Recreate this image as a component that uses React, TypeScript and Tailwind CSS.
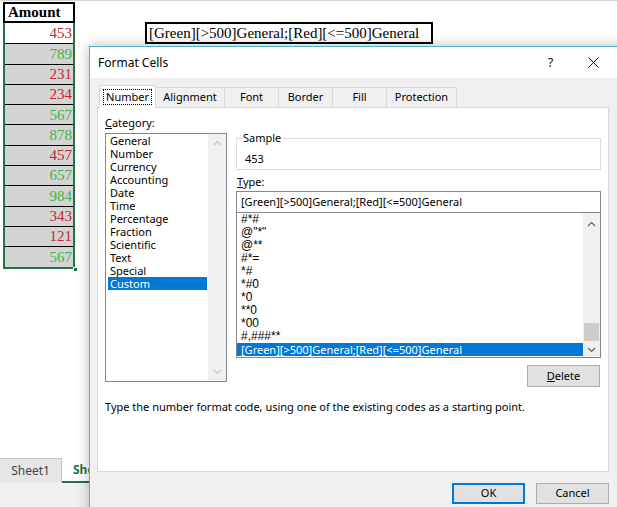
import React from 'react';

const UI = { fontFamily: '"Noto Sans", "Open Sans", sans-serif' };
const SERIF = { fontFamily: '"Liberation Serif", "Times New Roman", serif' };
const ARIAL = { fontFamily: '"Liberation Sans", Arial, sans-serif' };

const AMOUNTS: [number, 'r' | 'g'][] = [
  [453, 'r'], [789, 'g'], [231, 'r'], [234, 'r'], [567, 'g'], [878, 'g'],
  [457, 'r'], [657, 'g'], [984, 'g'], [343, 'r'], [121, 'r'], [567, 'g'],
];

const CATEGORIES = [
  'General', 'Number', 'Currency', 'Accounting', 'Date', 'Time',
  'Percentage', 'Fraction', 'Scientific', 'Text', 'Special', 'Custom',
];

const CODES = ['#*#', '@"*"', '@**', '#*=', '*#', '*#0', '*0', '**0', '*00', '#,###**'];

const TABS = [
  { label: 'Number', w: 'w-[57px]' },
  { label: 'Alignment', w: 'w-[69px]' },
  { label: 'Font', w: 'w-[54px]' },
  { label: 'Border', w: 'w-[54px]' },
  { label: 'Fill', w: 'w-[54px]' },
  { label: 'Protection', w: 'w-[70px]' },
];

function Chevron({ up, color }: { up?: boolean; color: string }) {
  return (
    <svg width="9" height="6" viewBox="0 0 9 6">
      <polyline
        points={up ? '1,5 4.5,1.5 8,5' : '1,1 4.5,4.5 8,1'}
        fill="none"
        stroke={color}
        strokeWidth="1.2"
      />
    </svg>
  );
}

function Sheet() {
  return (
    <div className="h-[457px] flex flex-row items-start">
      {/* Amount column */}
      <div className="ml-[3px] mt-[1px] w-[72px] flex flex-col relative">
        <div className="h-[21px] border-2 border-black pl-[3px] flex items-center text-[15px] font-bold text-black" style={SERIF}>
          Amount
        </div>
        <div className="border-x-2 border-b-2 border-[#217346]">
          {AMOUNTS.map(([n, c], i) => (
            <div
              key={i}
              className={`h-[20.3px] flex items-center justify-end pr-[1px] text-[15px] ${i > 0 ? 'border-t border-black bg-[#d4d4d4]' : 'bg-white'} ${c === 'r' ? 'text-[#c0282e]' : 'text-[#3cb44a]'}`}
              style={SERIF}
            >
              {n}
            </div>
          ))}
        </div>
        <div className="absolute right-[-3px] bottom-[-3px] w-[5px] h-[5px] bg-[#217346] border border-white" />
      </div>

      {/* Formula text */}
      <div
        className="ml-[70px] mt-[21px] w-[288px] h-[22px] border-2 border-black pl-[2px] flex items-center text-[15px] text-black"
        style={SERIF}
      >
        [Green][&gt;500]General;[Red][&lt;=500]General
      </div>
    </div>
  );
}

function SheetTabs() {
  return (
    <div className="flex flex-col" style={UI}>
      <div className="h-[25px] flex flex-row bg-[#f0f0f0]">
        <div className="w-[62px] bg-[#e6e6e6] border-t border-r border-[#c6c6c6] flex items-center justify-center text-[12px] text-[#444]">
          Sheet1
        </div>
        <div className="w-[62px] bg-white border-b-2 border-[#217346] pl-[11px] flex items-center text-[12px] font-bold text-[#217346]">
          Sheet2
        </div>
      </div>
      <div className="h-[25px] bg-[#f0f0f0]" />
    </div>
  );
}

function Dialog() {
  return (
    <div
      className="absolute left-[89px] top-[46px] w-[540px] h-[480px] border border-[#4fb3c3] bg-[#f0f0f0] shadow-[0_0_12px_rgba(0,0,0,0.28)] text-[11px] text-black flex flex-col"
      style={UI}
    >
      {/* Title bar */}
      <div className="h-[31px] bg-white flex flex-row items-center pl-[8px]">
        <span className="text-[12px] flex-1">Format Cells</span>
        <span className="text-[12px] w-[40px]">?</span>
        <svg className="mr-[29px]" width="11" height="11" viewBox="0 0 11 11">
          <path d="M0.5 0.5 L10.5 10.5 M10.5 0.5 L0.5 10.5" stroke="#111" strokeWidth="1" />
        </svg>
      </div>

      <div className="flex flex-col pl-[7px]">
        {/* Tabs */}
        <div className="h-[29px] flex flex-row items-end pl-[2px]">
          {TABS.map((t, i) =>
            i === 0 ? (
              <div key={t.label} className={`${t.w} h-[23px] -mb-[1px] bg-white border-x border-t border-[#d9d9d9] flex items-center justify-center relative z-10`}>
                <span className="border border-dotted border-black px-[2px] leading-[14px]">{t.label}</span>
              </div>
            ) : (
              <div key={t.label} className={`${t.w} h-[20px] bg-[#f0f0f0] border-r border-t border-[#d9d9d9] flex items-center justify-center`}>
                {t.label}
              </div>
            ),
          )}
        </div>

        {/* Panel */}
        <div className="w-[512px] h-[365px] bg-white border border-[#d9d9d9] flex flex-col pl-[7px] pr-[7px]">
          <div className="flex flex-row gap-[9px]">
            {/* Category */}
            <div className="w-[122px] flex flex-col">
              <div className="h-[14px] mt-[8px] leading-[14px]">
                <span className="underline">C</span>ategory:
              </div>
              <div className="mt-[3px] h-[249px] border border-[#828790] flex flex-row">
                <div className="flex-1 flex flex-col pl-[2px] pr-[1px]">
                  {CATEGORIES.map((c) => (
                    <div
                      key={c}
                      className={`h-[13px] leading-[13px] pl-[2px] ${c === 'Custom' ? 'bg-[#0078d7] text-white' : ''}`}
                    >
                      {c}
                    </div>
                  ))}
                </div>
                <div className="w-[18px] bg-[#f0f0f0] flex flex-col items-center justify-between py-[6px]">
                  <Chevron up color="#c2c2c2" />
                  <Chevron color="#c2c2c2" />
                </div>
              </div>
            </div>

            {/* Sample / Type */}
            <div className="w-[365px] flex flex-col">
              <div className="mt-[30px] h-[32px] border border-[#dcdcdc] relative flex items-center pl-[8px] pt-[10px]">
                <span className="absolute -top-[8px] left-[4px] bg-white px-[2px] leading-[14px]">Sample</span>
                453
              </div>
              <div className="mt-[5px] h-[14px] leading-[14px] pl-[1px]">
                <span className="underline">T</span>ype:
              </div>
              <div className="mt-[2px] h-[21px] border border-[#828790] border-b-0 flex items-center pl-[4px]">
                [Green][&gt;500]General;[Red][&lt;=500]General
              </div>
              <div className="h-[146px] border border-[#828790] flex flex-row">
                <div className="flex-1 flex flex-col">
                  {CODES.map((c) => (
                    <div key={c} className="h-[13px] leading-[13px] pl-[4px] text-[12px]" style={ARIAL}>
                      {c}
                    </div>
                  ))}
                  <div className="h-[13px] leading-[13px] pl-[4px] bg-[#0078d7] text-white">
                    [Green][&gt;500]General;[Red][&lt;=500]General
                  </div>
                </div>
                <div className="w-[17px] bg-[#f0f0f0] flex flex-col items-center pt-[8px] pb-[4px]">
                  <Chevron up color="#606060" />
                  <div className="flex-1" />
                  <div className="w-[15px] h-[18px] bg-[#cdcdcd] mb-[6px]" />
                  <Chevron color="#606060" />
                </div>
              </div>
              <div className="mt-[7px] flex flex-row justify-end pr-[1px]">
                <div className="w-[73px] h-[22px] bg-[#e1e1e1] border border-[#adadad] flex items-center justify-center">
                  <span className="underline">D</span>elete
                </div>
              </div>
            </div>
          </div>
          <div className="mt-[13px] h-[14px] leading-[14px]">
            Type the number format code, using one of the existing codes as a starting point.
          </div>
        </div>

        {/* Buttons */}
        <div className="mt-[11px] w-[512px] flex flex-row justify-end gap-[11px]">
          <div className="w-[73px] h-[21px] bg-[#e1e1e1] border-2 border-[#0078d7] flex items-center justify-center">OK</div>
          <div className="w-[73px] h-[21px] bg-[#e1e1e1] border border-[#adadad] flex items-center justify-center">Cancel</div>
        </div>
      </div>
    </div>
  );
}

export default function App() {
  return (
    <div className="relative w-[617px] h-[507px] overflow-hidden bg-white">
      <div className="border-t border-[#d4d4d4]" />
      <Sheet />
      <SheetTabs />
      <Dialog />
    </div>
  );
}
